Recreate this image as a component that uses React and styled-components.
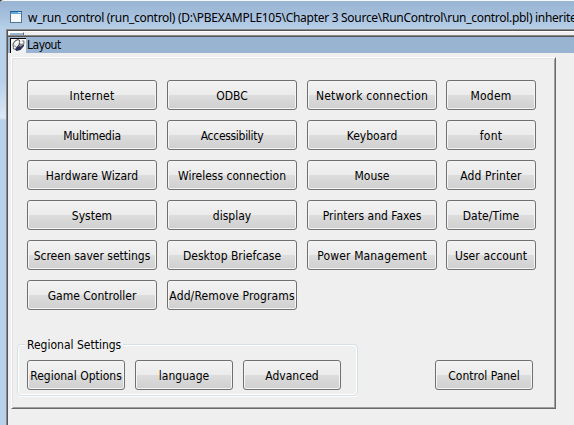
import React from 'react';
import styled, { createGlobalStyle } from 'styled-components';

const Global = createGlobalStyle`
  *{box-sizing:border-box}
  body{margin:0;background:#444;overflow:hidden}
`;
const Window = styled.div`
  width:574px;height:425px;overflow:hidden;display:flex;flex-direction:column;
  border-top:1px solid #f4f6f8;border-top-left-radius:4px;
  background:linear-gradient(#98b4d2 0,#a5bfdc 14px,#b9d1ea 29px,#b9d1ea 80px,#dce8f5 117px,#b9d1ea 119px);
  font-family:"DejaVu Sans Condensed","DejaVu Sans",sans-serif;font-stretch:condensed;font-size:12px;color:#000;
`;
const TitleBar = styled.header`
  height:28px;flex:none;display:flex;padding:10px 0 0 10px;gap:6px;
  font-family:"Noto Sans",sans-serif;font-stretch:normal;
  svg{flex:none}
`;
const Title = styled.span`
  white-space:pre;line-height:16px;margin-top:-1px;letter-spacing:-0.29px;
`;
const Client = styled.main`
  margin-left:6px;height:396px;border-left:1px solid #898989;border-top:1px solid #898989;
  box-shadow:inset 1px 1px #555;background:#efefef;padding:1px 0 0 1px;
`;
const Strip = styled.div`
  height:6px;background:#efefef;border-top:1px solid #fff;border-bottom:1px solid #555;
  box-shadow:inset 0 -1px #898989;display:flex;
`;
const Thumb = styled.i`
  width:15px;height:3px;margin-left:1px;background:#99b4d1;border:solid #fff;border-width:1px 0 0 1px;border-right:1px solid #696969;
`;
const Caption = styled.div`
  height:16px;background:#99b4d1;display:flex;gap:1px;padding-left:2px;line-height:16px;letter-spacing:-0.5px;
  svg{flex:none;margin-top:1px}
`;
const Panel = styled.section`
  width:545px;height:352px;margin:4px 0 0 3px;border:1px solid;
  border-color:#fff #696969 #696969 #fff;
  box-shadow:inset 1px 1px #e3e3e3,inset -1px -1px #a0a0a0;
  padding:22px 0 0 15px;
`;
const Grid = styled.div`
  display:grid;grid-template-columns:130px 130px 129px 90px;gap:10px;
  grid-auto-rows:30px;
`;
const Button = styled.button`
  width:${p => p.$w || 130}px;height:30px;padding:1px 0 0;border:1px solid #707070;border-radius:3px;
  background:linear-gradient(#f2f2f2 0,#ebebeb 50%,#dddddd 50%,#cfcfcf 100%);
  box-shadow:inset 0 0 0 1px #f5f5f5;
  font:inherit;font-stretch:inherit;color:#000;white-space:nowrap;
  display:flex;align-items:center;justify-content:center;
  letter-spacing:${p => p.$ls || 0}px;
`;
const Bottom = styled.div`display:flex;margin:35px 0 0 -10px;align-items:flex-start;`;
const Group = styled.fieldset`
  width:341px;height:58px;margin:-7px 0 0;padding:0 0 0 10px;border:0;position:relative;
  display:flex;flex-direction:column;
  &::before{content:"";position:absolute;inset:6px 0 0 0;border:1px solid #d5dfe5;border-radius:4px;box-shadow:inset 0 0 0 1px #fff,0 1px #fff}
`;
const Legend = styled.span`
  position:relative;align-self:flex-start;background:#efefef;padding:0 2px;line-height:14px;height:14px;margin-left:-2px;
`;
const Row = styled.div`display:flex;gap:10px;position:relative;margin-top:8px;`;
const Solo = styled.div`margin:15px 0 0 77px;`;

const WindowIcon = () => (
  <svg width="12" height="12" shapeRendering="crispEdges">
    <rect width="12" height="12" fill="#55738f" /><rect x="1" y="3" width="10" height="8" fill="#f5f9fc" />
    <rect width="12" height="1" fill="#1f5f9c" />
    <rect x="1" y="1" width="10" height="2" fill="#62a8da" /><rect x="8" y="1" width="3" height="1" fill="#d5e9f5" />
  </svg>
);
const LayoutIcon = () => (
  <svg width="16" height="15">
    <path d="M0 0h16v15H0z" fill="#000" /><path d="M1 1h15v14H1z" fill="#f2f2f2" />
    <path d="M4 10.500L9 8l5-3.500V8l-3.500 4-4 1z" fill="#2c2c58" />
    <path d="M7.500 7l5.500-5 1.500 1v3l-4 3z" fill="#8c8c94" />
    <path d="M3 6l2-3 3-1.500L10 3l-1 4-3 3-2.500 1z" fill="#e8e8e8" stroke="#333" strokeWidth=".9" />
    <path d="M5 5l2-2 1.500.5L6 7z" fill="#fff" />
    <ellipse cx="4.800" cy="9.600" rx="1.400" ry="1.500" fill="#fff" stroke="#555" strokeWidth=".6" />
    <ellipse cx="11.500" cy="4.500" rx="1.700" ry="1.200" fill="#fff" />
  </svg>
);
// label, width, letter spacing
const actions = [
  ['Internet', 130, 0.25], ['ODBC'], ['Network connection', 130, 0.23], ['Modem', 90, 0.2],
  ['Multimedia', 130, -0.25], ['Accessibility', 130, -0.3], ['Keyboard'], ['font', 90, 0.3],
  ['Hardware Wizard'], ['Wireless connection'], ['Mouse'], ['Add Printer', 90, 0.1],
  ['System'], ['display'], ['Printers and Faxes'], ['Date/Time', 90, 0.1],
  ['Screen saver settings'], ['Desktop Briefcase'], ['Power Management', 130, 0.15], ['User account', 90, 0.1],
  ['Game Controller'], ['Add/Remove Programs', 130, 0.13],
];
export default function App() {
  return (
    <><Global /><Window>
      <TitleBar><WindowIcon /><Title>w_run_control (run_control) (D:\PBEXAMPLE105\Chapter 3 Source\RunControl\run_control.pbl) inherite</Title></TitleBar>
      <Client>
        <Strip><Thumb /></Strip>
        <Caption><LayoutIcon /><span>Layout</span></Caption>
        <Panel>
          <Grid>{actions.map(([t, w, ls]) => <Button key={t} $w={w} $ls={ls}>{t}</Button>)}</Grid>
          <Bottom>
            <Group><Legend>Regional Settings</Legend>
              <Row><Button $w={98}>Regional Options</Button><Button $w={98}>language</Button><Button $w={98}>Advanced</Button></Row>
            </Group>
            <Solo><Button $w={98}>Control Panel</Button></Solo>
          </Bottom>
        </Panel>
      </Client>
    </Window></>
  );
}
